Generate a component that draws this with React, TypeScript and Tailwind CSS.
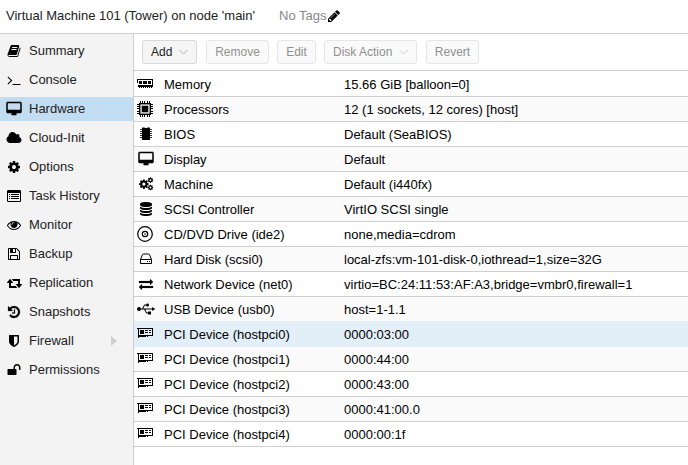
import { FaUsb } from 'react-icons/fa';

const PATHS: Record<string, string> = {
  book: 'M1703 478q40 57 18 129l-275 906q-19 64-76.5 107.5t-122.5 43.5h-923q-77 0-148.5-53.5t-99.5-131.5q-24-67-2-127 0-4 3-27t4-37q1-8-3-21.5t-3-19.5q2-11 8-21t16.5-23.5 16.5-23.5q23-38 45-91.5t30-91.5q3-10 .5-30t-.5-28q3-11 17-28t17-23q21-36 42-92t25-90q1-9-2.5-32t.5-28q4-13 22-30.5t22-22.5q19-26 42.5-84.5t27.5-96.5q1-8-3-25.5t-2-26.5q2-8 9-18t18-23 17-21q8-12 16.5-30.5t15-35 16-36 19.5-32 26.5-23.5 36-11.5 47.5 5.5l-1 3q38-9 51-9h761q74 0 114 56t18 130l-274 906q-36 119-71.5 153.5t-128.5 34.5h-869q-27 0-38 15-11 16-1 43 24 70 144 70h923q29 0 56-15.5t35-41.5l300-987q7-22 5-57 38 15 59 43zm-1064 2q-4 13 2 22.5t20 9.5h608q13 0 25.5-9.5t16.5-22.5l21-64q4-13-2-22.5t-20-9.5h-608q-13 0-25.5 9.5t-16.5 22.5zm-83 256q-4 13 2 22.5t20 9.5h608q13 0 25.5-9.5t16.5-22.5l21-64q4-13-2-22.5t-20-9.5h-608q-13 0-25.5 9.5t-16.5 22.5z',
  terminal: 'M649 983l-466 466q-10 10-23 10t-23-10l-50-50q-10-10-10-23t10-23l393-393-393-393q-10-10-10-23t10-23l50-50q10-10 23-10t23 10l466 466q10 10 10 23t-10 23zm1079 457v64q0 14-9 23t-23 9h-960q-14 0-23-9t-9-23v-64q0-14 9-23t23-9h960q14 0 23 9t9 23z',
  desktop: 'M1728 992v-832q0-13-9.5-22.5t-22.5-9.5h-1600q-13 0-22.5 9.5t-9.5 22.5v832q0 13 9.5 22.5t22.5 9.5h1600q13 0 22.5-9.5t9.5-22.5zm128-832v1088q0 66-47 113t-113 47h-544q0 37 16 77.5t32 71 16 43.5q0 26-19 45t-45 19h-512q-26 0-45-19t-19-45q0-14 16-44t32-70 16-78h-544q-66 0-113-47t-47-113v-1088q0-66 47-113t113-47h1600q66 0 113 47t47 113z',
  cloud: 'M1984 1152q0 159-112.5 271.5t-271.5 112.5h-1088q-185 0-316.5-131.5t-131.5-316.5q0-132 71-241.5t187-163.5q-2-28-2-43 0-212 150-362t362-150q158 0 286.5 88t187.5 230q70-62 166-62 106 0 181 75t75 181q0 75-41 138 129 30 213 134.5t84 239.5z',
  gear: 'M1152 896q0-106-75-181t-181-75-181 75-75 181 75 181 181 75 181-75 75-181zm512-109v222q0 12-8 23t-20 13l-185 28q-19 54-39 91 35 50 107 138 10 12 10 25t-9 23q-27 37-99 108t-94 71q-12 0-26-9l-138-108q-44 23-91 38-16 136-29 186-7 28-36 28h-222q-14 0-24.5-8.5t-11.5-21.5l-28-184q-49-16-90-37l-141 107q-10 9-25 9-14 0-25-11-126-114-165-168-7-10-7-23 0-12 8-23 15-21 51-66.5t54-70.5q-27-50-41-99l-183-27q-13-2-21-12.5t-8-23.5v-222q0-12 8-23t19-13l186-28q14-46 39-92-40-57-107-138-10-12-10-24 0-10 9-23 26-36 98.5-107.5t94.5-71.5q13 0 26 10l138 107q44-23 91-38 16-136 29-186 7-28 36-28h222q14 0 24.5 8.5t11.5 21.5l28 184q49 16 90 37l142-107q9-9 24-9 13 0 25 10 129 119 165 170 7 8 7 22 0 12-8 23-15 21-51 66.5t-54 70.5q26 50 41 98l183 28q13 2 21 12.5t8 23.5z',
  list: 'M0 288q0-160 160-160h1472q160 0 160 160v1216q0 160-160 160h-1472q-160 0-160-160zM128 512v960q0 64 64 64h1408q64 0 64-64v-960zM256 640h128v128h-128zM512 640h1024v128h-1024zM256 896h128v128h-128zM512 896h1024v128h-1024zM256 1152h128v128h-128zM512 1152h1024v128h-1024z',
  eye: 'M1664 960q-152-236-381-353 61 104 61 225 0 185-131.5 316.5t-316.5 131.5-316.5-131.5-131.5-316.5q0-121 61-225-229 117-381 353 133 205 333.5 326.5t434.5 121.5 434.5-121.5 333.5-326.5zm-720-384q0-20-14-34t-34-14q-125 0-214.5 89.5t-89.5 214.5q0 20 14 34t34 14 34-14 14-34q0-86 61-147t147-61q20 0 34-14t14-34zm848 384q0 34-20 69-140 230-376.5 368.5t-499.5 138.5-499.5-139-376.5-368q-20-35-20-69t20-69q140-229 376.5-368t499.5-139 499.5 139 376.5 368q20 35 20 69z',
  floppy: 'M512 1536h768v-384h-768v384zm896 0h128v-896q0-14-10-38.5t-20-34.5l-281-281q-10-10-34-20t-39-10v416q0 40-28 68t-68 28h-576q-40 0-68-28t-28-68v-416h-128v1280h128v-416q0-40 28-68t68-28h832q40 0 68 28t28 68v416zm-384-928v-320q0-13-9.5-22.5t-22.5-9.5h-192q-13 0-22.5 9.5t-9.5 22.5v320q0 13 9.5 22.5t22.5 9.5h192q13 0 22.5-9.5t9.5-22.5zm640 32v928q0 40-28 68t-68 28h-1344q-40 0-68-28t-28-68v-1344q0-40 28-68t68-28h928q40 0 88 20t76 48l280 280q28 28 48 76t20 88z',
  retweet: 'M1280 1504q0 13-9.5 22.5t-22.5 9.5h-960q-8 0-13.5-2t-9-7-5.5-8-3-11.5-1-11.5v-600h-192q-26 0-45-19t-19-45q0-24 15-41l320-384q19-22 49-22t49 22l320 384q15 17 15 41 0 26-19 45t-45 19h-192v384h576q16 0 25 11l160 192q7 10 7 21zm640-416q0 24-15 41l-320 384q-20 23-49 23t-49-23l-320-384q-15-17-15-41 0-26 19-45t45-19h192v-384h-576q-16 0-25-12l-160-192q-7-9-7-20 0-13 9.5-22.5t22.5-9.5h960q8 0 13.5 2t9 7 5.5 8 3 11.5 1 11.5v600h192q26 0 45 19t19 45z',
  history: 'M1664 896q0 156-61 298t-164 245-245 164-298 61q-172 0-327-72.5t-264-204.5q-7-10-6.5-22.5t8.5-20.5l137-138q10-9 25-9 16 2 23 12 73 95 179 147t225 52q104 0 198.5-40.5t163.5-109.5 109.5-163.5 40.5-198.5-40.5-198.5-109.5-163.5-163.5-109.5-198.5-40.5q-98 0-188 35.5t-160 101.5l137 138q31 30 14 69-17 40-59 40h-448q-26 0-45-19t-19-45v-448q0-42 40-59 39-17 69 14l130 129q107-101 244.5-156.5t284.5-55.5q156 0 298 61t245 164 164 245 61 298zm-640-288v448q0 14-9 23t-23 9h-320q-14 0-23-9t-9-23v-64q0-14 9-23t23-9h224v-352q0-14 9-23t23-9h64q14 0 23 9t9 23z',
  shield: 'M1344 960v-640h-448v1137q119-63 213-137 235-184 235-360zm192-768v768q0 86-33.5 170.5t-83 150-118 127.5-126.5 103-121 77.5-89.5 49.5-42.5 20q-12 6-26 6t-26-6q-16-7-42.5-20t-89.5-49.5-121-77.5-126.5-103-118-127.5-83-150-33.5-170.5v-768q0-26 19-45t45-19h1152q26 0 45 19t19 45z',
  unlock: 'M1728 576v256q0 26-19 45t-45 19h-64q-26 0-45-19t-19-45v-256q0-106-75-181t-181-75-181 75-75 181v192h96q40 0 68 28t28 68v576q0 40-28 68t-68 28h-960q-40 0-68-28t-28-68v-576q0-40 28-68t68-28h672v-192q0-185 131.5-316.5t316.5-131.5 316.5 131.5 131.5 316.5z',
  pencil: 'M491 1536l91-91-235-235-91 91v107h128v128h107zm523-928q0-22-22-22-10 0-17 7l-542 542q-7 7-7 17 0 22 22 22 10 0 17-7l542-542q7-7 7-17zm-54-192l416 416-832 832h-416v-416zm683 96q0 53-37 90l-166 166-416-416 166-165q36-38 90-38 53 0 91 38l235 234q37 39 37 91z',
  database: 'M896 768q237 0 443-43t325-127v170q0 69-103 128t-280 93.5-385 34.5-385-34.5-280-93.5-103-128v-170q119 84 325 127t443 43zm0 768q237 0 443-43t325-127v170q0 69-103 128t-280 93.5-385 34.5-385-34.5-280-93.5-103-128v-170q119 84 325 127t443 43zm0-384q237 0 443-43t325-127v170q0 69-103 128t-280 93.5-385 34.5-385-34.5-280-93.5-103-128v-170q119 84 325 127t443 43zm0-1152q208 0 385 34.5t280 93.5 103 128v128q0 69-103 128t-280 93.5-385 34.5-385-34.5-280-93.5-103-128v-128q0-69 103-128t280-93.5 385-34.5z',
  exchange: 'M1792 1184v192q0 13-9.5 22.5t-22.5 9.5h-1376v192q0 13-9.5 22.5t-22.5 9.5q-12 0-24-10l-319-320q-9-9-9-22 0-14 9-23l320-320q9-9 23-9 13 0 22.5 9.5t9.5 22.5v192h1376q13 0 22.5 9.5t9.5 22.5zm0-544q0 14-9 23l-320 320q-9 9-23 9-13 0-22.5-9.5t-9.5-22.5v-192h-1376q-13 0-22.5-9.5t-9.5-22.5v-192q0-13 9.5-22.5t22.5-9.5h1376v-192q0-14 9-23t23-9q12 0 24 10l319 319q9 9 9 23z',
};

// Wide glyphs keep the same 14px em height
const WIDTHS: Record<string, number> = { desktop: 1856, cloud: 1984, retweet: 1920 };

// Thin outlines get a little extra weight at this size
const STROKES: Record<string, number> = { desktop: 70, history: 30, exchange: 20 };

function Icon({ name }: { name: string }) {
  const w = WIDTHS[name] ?? 1792;
  return (
    <svg
      className="shrink-0 overflow-visible"
      width={(w / 1792) * 14}
      height={14}
      viewBox={`0 0 ${w} 1792`}
      fill="currentColor"
      fillRule={name === 'list' ? 'evenodd' : 'nonzero'}
      stroke="currentColor"
      strokeWidth={STROKES[name] ?? 0}
    >
      <path d={PATHS[name]} />
    </svg>
  );
}

function HardwareIcon({ name }: { name: string }) {
  switch (name) {
    case 'memory':
      return (
        <svg className="mr-[2px] shrink-0" width="16" height="16" viewBox="0 0 16 16" shapeRendering="crispEdges">
          <path fillRule="evenodd" d="M0 3h16v8h-1v1h-1v-1h-1v1h-1v-1h-1v1h-1v-1h-1v1h-1v-1h-1v1h-1v-1h-1v1h-1v-1h-1v1h-1v-1h-1zM1 4v5h14v-5zM2 5h3v3h-3zM6 5h4v3h-4zM11 5h3v3h-3z" />
        </svg>
      );
    case 'cpu':
      return (
        <svg className="mr-[2px] shrink-0" width="16" height="16" viewBox="0 0 16 16">
          <rect x="2.7" y="2.7" width="10.6" height="10.6" fill="none" stroke="black" strokeWidth="1.4" />
          <path d="M4.5 4.5h7v7h-7z" fill="#777" />
          <path d="M5 5h6v6h-6z" />
          <path d="M3.5 0v2M5.5 0v2M7.5 0v2M10.5 0v2M12.5 0v2M3.5 14v2M5.5 14v2M7.5 14v2M10.5 14v2M12.5 14v2M0 3.5h2M0 5.5h2M0 7.5h2M0 10.5h2M0 12.5h2M14 3.5h2M14 5.5h2M14 7.5h2M14 10.5h2M14 12.5h2" stroke="black" />
        </svg>
      );
    case 'bios':
      return (
        <svg width="16" height="16" viewBox="0 0 16 16">
          <path d="M4 2q0-.5.5-.5h2q1.5 1.2 3 0h2q.5 0 .5.5v11.5q0 .5-.5.5h-7q-.5 0-.5-.5z" />
          <path d="M2 3.5h12M2 5.5h12M2 7.5h12M2 9.5h12M2 11.5h12" stroke="black" strokeWidth=".8" />
        </svg>
      );
    case 'cogs':
      return (
        <svg width="16" height="14" viewBox="0 0 16 14">
          <path d={PATHS.gear} transform="translate(.3 1.6) scale(.0062)" />
          <path d={PATHS.gear} transform="translate(9.2 -.1) scale(.0036)" />
          <path d={PATHS.gear} transform="translate(9.2 7.3) scale(.0036)" />
        </svg>
      );
    case 'cd':
      return (
        <svg className="mr-[2px] shrink-0" width="16" height="16" viewBox="0 0 16 16" fill="none" stroke="black" strokeWidth="1.2">
          <circle cx="8" cy="8" r="7.3" />
          <circle cx="8" cy="8" r="2.7" />
          <circle cx="8" cy="8" r=".8" fill="black" stroke="none" />
        </svg>
      );
    case 'hdd':
      return (
        <svg width="14" height="14" viewBox="0 0 14 14" fill="none" stroke="black">
          <path d="M1.5 7.5l2-5q.2-.5 1-.5h5q.8 0 1 .5l2 5v4h-11zM1.5 7.5h11" />
          <path d="M8 9.5h1M10 9.5h1" />
        </svg>
      );
    case 'usb':
      return <FaUsb size={18} className="shrink-0" />;
    case 'pci':
      return (
        <svg className="mr-[2px] shrink-0" width="16" height="16" viewBox="0 0 16 16" shapeRendering="crispEdges">
          <path fillRule="evenodd" d="M0 2h16v8h-5v1h-1v-1h-1v1h-7v1h-1v-9h-1zM2 3v6h13v-6zM3 4h4v4h-4zM8 4h3v1h-3zM12 4h2v1h-2zM8 6h3v1h-3zM12 6h2v1h-2z" />
        </svg>
      );
    default:
      return <Icon name={name} />;
  }
}

const NAV = [
  { icon: 'book', label: 'Summary' },
  { icon: 'terminal', label: 'Console' },
  { icon: 'desktop', label: 'Hardware', active: true },
  { icon: 'cloud', label: 'Cloud-Init' },
  { icon: 'gear', label: 'Options' },
  { icon: 'list', label: 'Task History' },
  { icon: 'eye', label: 'Monitor' },
  { icon: 'floppy', label: 'Backup' },
  { icon: 'retweet', label: 'Replication' },
  { icon: 'history', label: 'Snapshots' },
  { icon: 'shield', label: 'Firewall', expandable: true },
  { icon: 'unlock', label: 'Permissions' },
];

const DEVICES = [
  { icon: 'memory', name: 'Memory', value: '15.66 GiB [balloon=0]' },
  { icon: 'cpu', name: 'Processors', value: '12 (1 sockets, 12 cores) [host]' },
  { icon: 'bios', name: 'BIOS', value: 'Default (SeaBIOS)' },
  { icon: 'desktop', name: 'Display', value: 'Default' },
  { icon: 'cogs', name: 'Machine', value: 'Default (i440fx)' },
  { icon: 'database', name: 'SCSI Controller', value: 'VirtIO SCSI single' },
  { icon: 'cd', name: 'CD/DVD Drive (ide2)', value: 'none,media=cdrom' },
  { icon: 'hdd', name: 'Hard Disk (scsi0)', value: 'local-zfs:vm-101-disk-0,iothread=1,size=32G' },
  { icon: 'exchange', name: 'Network Device (net0)', value: 'virtio=BC:24:11:53:AF:A3,bridge=vmbr0,firewall=1' },
  { icon: 'usb', name: 'USB Device (usb0)', value: 'host=1-1.1' },
  { icon: 'pci', name: 'PCI Device (hostpci0)', value: '0000:03:00' },
  { icon: 'pci', name: 'PCI Device (hostpci1)', value: '0000:44:00' },
  { icon: 'pci', name: 'PCI Device (hostpci2)', value: '0000:43:00' },
  { icon: 'pci', name: 'PCI Device (hostpci3)', value: '0000:41:00.0' },
  { icon: 'pci', name: 'PCI Device (hostpci4)', value: '0000:00:1f' },
];

const BUTTONS = [
  { label: 'Add', size: 'w-[55px] mr-[9px]', menu: true, enabled: true },
  { label: 'Remove', size: 'w-[63px] mr-2' },
  { label: 'Edit', size: 'w-[39px] mr-2' },
  { label: 'Disk Action', size: 'w-[93px] mr-[9px]', menu: true },
  { label: 'Revert', size: 'w-[53px]' },
];

export default function App() {
  const selected = 10;

  return (
    <div className="flex h-[465px] w-[688px] flex-col overflow-hidden bg-white font-['Liberation_Sans',Arial,sans-serif] text-[13px] leading-4 text-black">
      <header className="flex h-[34px] shrink-0 items-center border-b border-[#cfcfcf] pb-[2px] pl-[6px] text-[#222]">
        <span className="w-[273px] whitespace-nowrap">Virtual Machine 101 (Tower) on node 'main'</span>
        <span className="mr-px text-[#888]">No Tags</span>
        <span className="text-black"><Icon name="pencil" /></span>
      </header>

      <div className="flex min-h-0 flex-1">
        <nav className="flex w-[134px] shrink-0 flex-col gap-[5px] border-r border-[#cfcfcf] bg-[#f3f3f3] pt-[5px]">
          {NAV.map((item) => (
            <div
              key={item.label}
              className={`flex h-6 shrink-0 items-center text-[#222] ${item.active ? 'bg-[#c2ddf2]' : ''}`}
            >
              <span className="flex w-[28px] shrink-0 justify-center text-black">
                <Icon name={item.icon} />
              </span>
              <span className="flex-1 whitespace-nowrap pl-px">{item.label}</span>
              {item.expandable && (
                <svg className="mr-4" width="6" height="10" viewBox="0 0 6 10"><path d="M0 0l6 5-6 5z" fill="#cfcfcf" /></svg>
              )}
            </div>
          ))}
        </nav>

        <main className="min-w-0 flex-1">
          {/* Toolbar */}
          <div className="mb-px flex h-[37px] items-center border-b border-[#cfcfcf] pl-2">
            {BUTTONS.map((b) => (
              <button
                key={b.label}
                className={`flex h-6 items-center whitespace-nowrap rounded-[3px] border px-2 text-[12px] ${b.size} ${b.menu ? 'justify-between' : 'justify-center'} ${b.enabled ? 'border-[#d8d8d8] bg-[#f5f5f5] text-[#222]' : 'border-[#e6e6e6] bg-[#fafafa] text-[#909090]'}`}
              >
                {b.label}
                {b.menu && (
                  <svg className={b.enabled ? 'text-[#aaa]' : 'text-[#ccc]'} width="9" height="6" viewBox="0 0 9 6" fill="none" stroke="currentColor">
                    <path d="M.5 1l4 4 4-4" />
                  </svg>
                )}
              </button>
            ))}
          </div>

          {/* Hardware grid */}
          {DEVICES.map((d, i) => (
            <div
              key={d.name}
              className={`flex h-[25px] items-center border-b ${i === selected ? 'border-[#e2eff8] bg-[#e2eff8]' : i === selected - 1 ? 'border-[#e2eff8] bg-[#fafafa]' : i % 2 ? 'border-[#cfcfcf] bg-[#fafafa]' : 'border-[#cfcfcf] bg-white'}`}
            >
              <span className="flex w-[24px] shrink-0 justify-center">
                <HardwareIcon name={d.icon} />
              </span>
              <span className="w-[180px] whitespace-nowrap pl-[6px] pt-[2px]">{d.name}</span>
              <span className="whitespace-nowrap pl-[6px] pt-[2px]">{d.value}</span>
            </div>
          ))}
        </main>
      </div>
    </div>
  );
}
